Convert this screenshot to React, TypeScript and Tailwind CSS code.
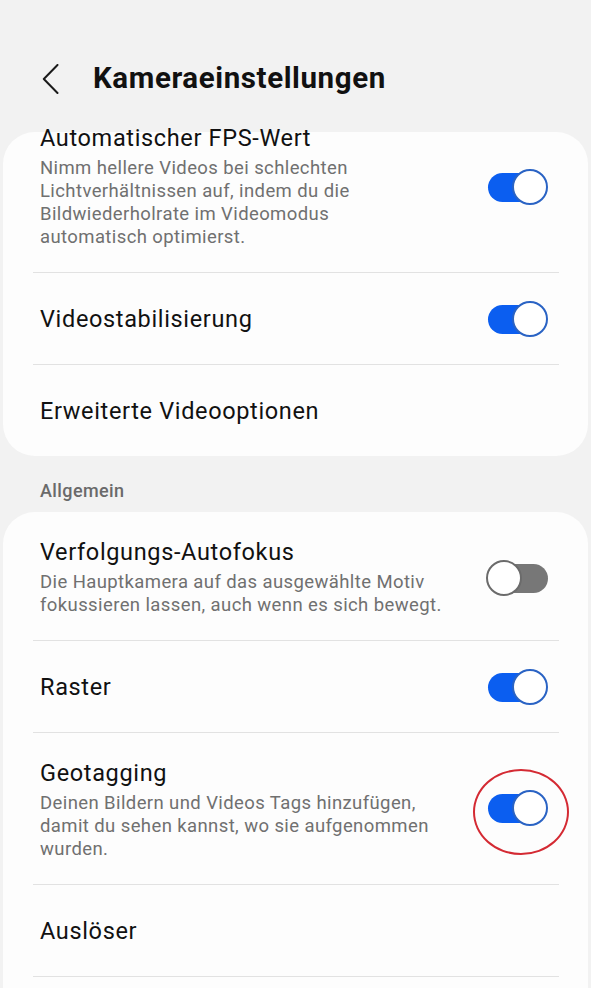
import React from "react";

const Toggle = ({ on, circled }: { on: boolean; circled?: boolean }) => (
  <div className="relative w-[60px] h-[36px] shrink-0">
    {on ? (
      <>
        <div className="absolute left-0 top-[4px] w-[50px] h-[29px] rounded-full bg-[#0b5ef0]" />
        <div className="absolute right-0 top-0 w-[36px] h-[36px] rounded-full bg-white border-[2px] border-[#2a63c4]" />
      </>
    ) : (
      <>
        <div className="absolute right-0 top-[4px] w-[50px] h-[29px] rounded-full bg-[#777777]" />
        <div className="absolute left-[-2px] top-0 w-[36px] h-[36px] rounded-full bg-white border-[2px] border-[#6b6b6b]" />
      </>
    )}
    {circled && (
      <div className="absolute left-[-15px] top-[-21px] w-[96px] h-[86px] rounded-[50%] border-[2px] border-[#d42a33]" />
    )}
  </div>
);

const Divider = () => <div className="ml-[30px] mr-[29px] h-px bg-[#e2e2e2]" />;

const SimpleRow = ({ title, toggle }: { title: string; toggle?: boolean }) => (
  <div className="h-[91px] flex items-center pl-[37px] pr-[40px]">
    <div className="flex-1 text-[23.5px] leading-[28px] tracking-[0.65px] text-[#111111] whitespace-nowrap">{title}</div>
    {toggle !== undefined && <Toggle on={toggle} />}
  </div>
);

const DescRow = ({
  title,
  lines,
  on,
  circled,
  top = 0,
  toggleShift = 0,
}: {
  title: string;
  lines: string[];
  on: boolean;
  circled?: boolean;
  top?: number;
  toggleShift?: number;
}) => (
  <div className="flex items-center pl-[37px] pr-[40px] pt-[26px] pb-[23px]" style={{ marginTop: top }}>
    <div className="flex-1 min-w-0">
      <div className="text-[23.5px] leading-[28px] tracking-[0.65px] text-[#111111] whitespace-nowrap">{title}</div>
      <div className="mt-[5px] text-[18.5px] leading-[23px] tracking-[0.4px] text-[#707070] whitespace-nowrap">
        {lines.map((l, i) => (
          <div key={i}>{l}</div>
        ))}
      </div>
    </div>
    <div style={{ transform: `translateY(${toggleShift}px)` }}>
      <Toggle on={on} circled={circled} />
    </div>
  </div>
);

export default function App() {
  return (
    <div className="w-[591px] h-[988px] overflow-hidden bg-[#f2f2f2]" style={{ fontFamily: "Roboto, 'Noto Sans', sans-serif" }}>
      <div className="h-[132px] pt-[58px] flex items-start">
        <div className="ml-[42px] mt-[6px] w-[17px] h-[30px]">
          <svg width="17" height="30" viewBox="0 0 17 30" fill="none">
            <path d="M15.5 1 L1.8 15 L15.5 29" stroke="#1a1a1a" strokeWidth="2" strokeLinecap="round" strokeLinejoin="round" />
          </svg>
        </div>
        <div className="ml-[34px] text-[29.5px] leading-[40px] font-bold text-[#111111] tracking-[0.6px]">
          Kameraeinstellungen
        </div>
      </div>

      <div className="mx-[3px] bg-[#fdfdfd] rounded-[32px] flex flex-col">
        <DescRow
          title="Automatischer FPS-Wert"
          lines={[
            "Nimm hellere Videos bei schlechten",
            "Lichtverhältnissen auf, indem du die",
            "Bildwiederholrate im Videomodus",
            "automatisch optimierst.",
          ]}
          on
          top={-34}
        />
        <Divider />
        <SimpleRow title="Videostabilisierung" toggle />
        <Divider />
        <SimpleRow title="Erweiterte Videooptionen" />
      </div>

      <div className="h-[56px] pl-[40px] pt-[24px] text-[18px] leading-[22px] tracking-[0.4px] font-medium text-[#6a6a6a]">Allgemein</div>

      <div className="mx-[3px] bg-[#fdfdfd] rounded-t-[32px] pb-[40px] flex flex-col">
        <DescRow
          title="Verfolgungs-Autofokus"
          lines={["Die Hauptkamera auf das ausgewählte Motiv", "fokussieren lassen, auch wenn es sich bewegt."]}
          on={false}
        />
        <Divider />
        <SimpleRow title="Raster" toggle />
        <Divider />
        <DescRow
          title="Geotagging"
          lines={["Deinen Bildern und Videos Tags hinzufügen,", "damit du sehen kannst, wo sie aufgenommen", "wurden."]}
          on
          circled
          toggleShift={-2}
        />
        <Divider />
        <SimpleRow title="Auslöser" />
        <Divider />
      </div>
    </div>
  );
}
